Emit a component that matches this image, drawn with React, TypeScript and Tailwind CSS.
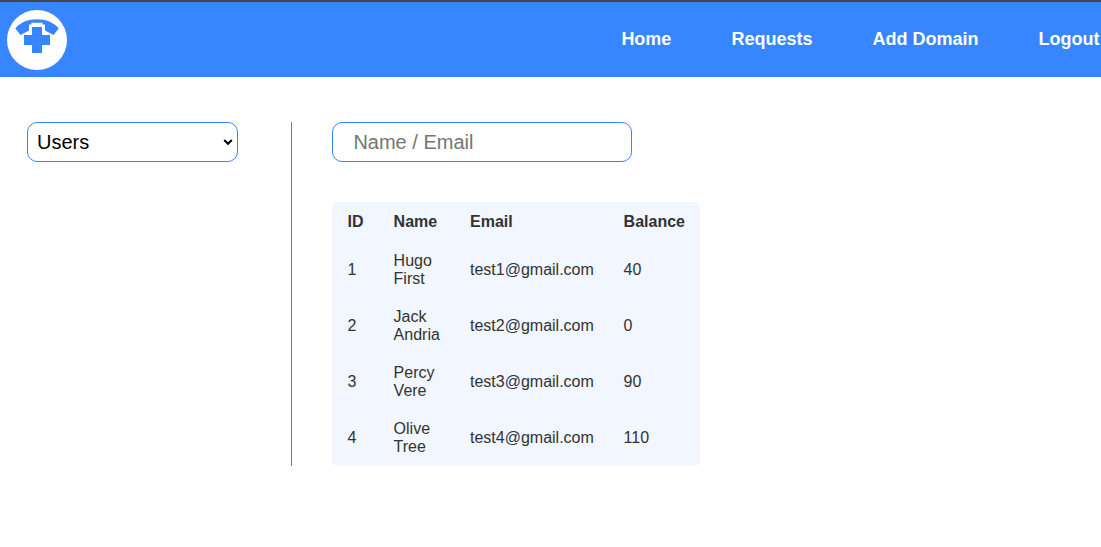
const users = [
  { id: 1, first: "Hugo", last: "First", email: "test1@gmail.com", balance: 40 },
  { id: 2, first: "Jack", last: "Andria", email: "test2@gmail.com", balance: 0 },
  { id: 3, first: "Percy", last: "Vere", email: "test3@gmail.com", balance: 90 },
  { id: 4, first: "Olive", last: "Tree", email: "test4@gmail.com", balance: 110 },
];

function Logo() {
  return (
    <svg width="60" height="60" viewBox="0 0 60 60" className="shrink-0">
      <circle cx="30" cy="30" r="30" fill="#fff" />
      <path d="M8.3 18.5C13 12.5 21 9.3 30 9.3S47 12.5 51.7 18.5L46.5 25L38 20.5V14.5H35.5V12.7H24.5V14.5H22V20.5L13.5 25Z" fill="#3786ff" />
      <path d="M25 17H35V25H43V35H35V43H25V35H17V25H25Z" fill="#3786ff" />
    </svg>
  );
}

export default function App() {
  return (
    <div className="h-[547px] w-full overflow-hidden bg-white font-['Liberation_Sans',Arial,sans-serif] text-black">
      <header className="flex h-[77px] items-center justify-between border-t-2 border-[#454545] bg-[#3786ff] pl-[7px] pr-[1.6px] pt-px">
        <Logo />
        <nav className="flex gap-[60px] pb-0.5 text-[18px] leading-[22px] font-bold whitespace-nowrap text-white">
          <a>Home</a>
          <a>Requests</a>
          <a>Add Domain</a>
          <a>Logout</a>
        </nav>
      </header>
      <main className="flex h-[389px] pt-[45px]">
        <aside className="w-[292px] shrink-0 border-r border-[#3786ff] pl-[27px]">
          <div className="grid w-[211px] items-center">
            <select className="col-start-1 row-start-1 block h-10 w-full appearance-none rounded-[10px] border border-[#3786ff] bg-white px-[9px] text-[20px] text-black">
              <option>Users</option>
            </select>
            <svg width="10" height="8" viewBox="0 0 10 8" className="pointer-events-none z-10 col-start-1 row-start-1 mr-[5px] justify-self-end">
              <path d="M1.2 2L5 5.8L8.8 2" fill="none" stroke="#000" strokeWidth="2" />
            </svg>
          </div>
        </aside>
        <section className="pl-10">
          <input
            placeholder="Name / Email"
            className="block h-10 w-[300px] rounded-[10px] border border-[#3786ff] px-[20.4px] text-[20px] placeholder:text-[#757575]"
          />
          <table className="mt-10 w-[368px] table-fixed border-separate border-spacing-0 rounded-[5px] bg-[#f1f6ff] text-left text-base leading-[18px] text-[#333]">
            <colgroup>
              <col className="w-[46px]" />
              <col className="w-[76px]" />
              <col className="w-[154px]" />
              <col className="w-[92px]" />
            </colgroup>
            <thead>
              <tr className="h-10">
                <th className="pl-[15.6px]">ID</th>
                <th className="pl-[15.6px]">Name</th>
                <th className="pl-4">Email</th>
                <th className="pl-[15.6px]">Balance</th>
              </tr>
            </thead>
            <tbody>
              {users.map((user) => (
                <tr key={user.id} className="h-14">
                  <td className="pl-[15.6px]">{user.id}</td>
                  <td className="pl-[15.6px]">{user.first}<br />{user.last}</td>
                  <td className="pl-4">{user.email}</td>
                  <td className="pl-[15.6px]">{user.balance}</td>
                </tr>
              ))}
            </tbody>
          </table>
        </section>
      </main>
    </div>
  );
}
